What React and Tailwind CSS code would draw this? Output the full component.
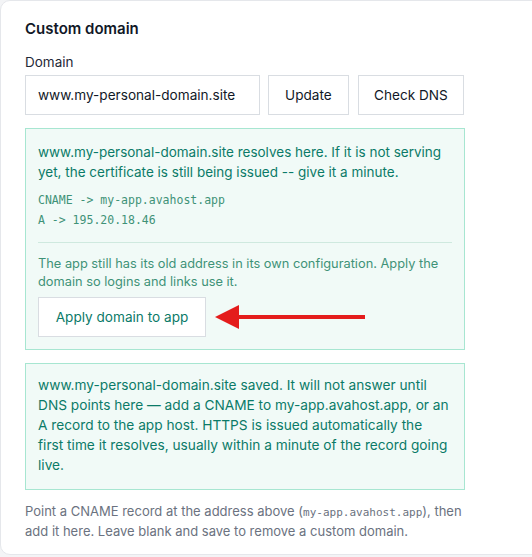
export default function App() {
  return (
    <div className="min-h-[557px] bg-[#f3f4f6] font-['Inter',sans-serif]">
      <div className="w-[560px] h-[555px] bg-white rounded-[10px] border border-[#e5e7eb] px-6 pt-[18px]">
        <h2 className="text-[15px] font-semibold text-[#111827] leading-[20px]">Custom domain</h2>

        <div className="mt-[14px] text-[13.5px] text-[#1f2937] leading-[18px]">Domain</div>
        <div className="mt-[4px] flex gap-[8px] w-[439px]">
          <input
            readOnly
            value="www.my-personal-domain.site"
            className="w-[235px] h-[40px] px-3 text-[13.6px] text-[#111827] border border-[#d9dde2] bg-white outline-none"
          />
          <button className="w-[82px] h-[40px] text-[13.6px] text-[#111827] border border-[#d9dde2] bg-white">Update</button>
          <button className="w-[108px] h-[40px] ml-[1px] text-[13.6px] text-[#111827] border border-[#d9dde2] bg-white">Check DNS</button>
        </div>

        <div className="mt-[13px] w-[440px] border border-[#a7e6d1] bg-[#f1faf7] px-[12px] pt-[13px] pb-[12px]">
          <p className="text-[13.5px] leading-[20px] text-[#0b7a68]">
            www.my-personal-domain.site resolves here. If it is not serving yet, the certificate is still being issued -- give it a minute.
          </p>
          <div className="mt-[8px] font-['DejaVu_Sans_Mono',monospace] text-[11.5px] leading-[20px] text-[#3f9277]">
            <div>CNAME -&gt; my-app.avahost.app</div>
            <div>A -&gt; 195.20.18.46</div>
          </div>
          <div className="mt-[12px] border-t border-[#cfe9df]" />
          <p className="mt-[12px] text-[12.8px] leading-[18px] text-[#3f9277]">
            The app still has its old address in its own configuration. Apply the domain so logins and links use it.
          </p>
          <div className="mt-[6px] flex items-center gap-[9px]">
            <button className="w-[168px] h-[40px] text-[13.6px] text-[#0b7a68] border border-[#d9dde2] bg-white">Apply domain to app</button>
            <svg width="150" height="26" viewBox="0 0 150 26">
              <polygon points="0,13 24,1 24,25" fill="#e41c1c" />
              <rect x="22" y="11" width="128" height="4" fill="#e41c1c" />
            </svg>
          </div>
        </div>

        <div className="mt-[13px] w-[440px] border border-[#a7e6d1] bg-[#f1faf7] px-[12px] pt-[11px] pb-[14px]">
          <p className="text-[13.7px] leading-[20px] text-[#0b7a68]">
            www.my-personal-domain.site saved. It will not answer until DNS points here — add a CNAME to my-app.avahost.app, or an A record to the app host. HTTPS is issued automatically the
            <br />
            first time it resolves, usually within a minute of the record going live.
          </p>
        </div>

        <p className="mt-[11px] w-[445px] text-[13px] leading-[20px] text-[#6b7280]">
          Point a CNAME record at the address above (<span className="font-['DejaVu_Sans_Mono',monospace] text-[11px] leading-none">my-app.avahost.app</span>), then add it here. Leave blank and save to remove a custom domain.
        </p>
      </div>
    </div>
  );
}
